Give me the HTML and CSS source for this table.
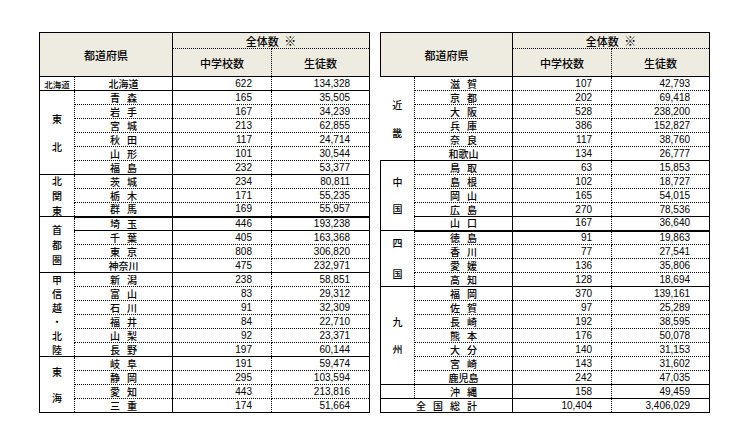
FILE: index.html
```html
<!DOCTYPE html>
<html lang="ja">
<head>
<meta charset="utf-8">
<title>都道府県別 中学校数・生徒数</title>
<link rel="stylesheet" href="styles.css">
</head>
<body>
<div class="page">
  <table class="tbl tbl-left">
    <colgroup><col class="c-reg"><col class="c-pref"><col class="c-n1"><col class="c-n2"></colgroup>
    <thead>
      <tr class="h1"><th colspan="2" rowspan="2" class="h-pref">都道府県</th><th colspan="2" class="h-total">全体数&ensp;<span class="mark">※</span></th></tr>
      <tr class="h2"><th class="h-sch">中学校数</th><th class="h-stu">生徒数</th></tr>
    </thead>
    <tbody>
      <tr class="end"><td class="reg small">北海道</td><td class="pref">北海道</td><td class="n1">622</td><td class="n2">134,328</td></tr>
      <tr><td class="reg v p28" rowspan="6"><span>東</span><span>北</span></td><td class="pref"><span class="s2">青森</span></td><td class="n1">165</td><td class="n2">35,505</td></tr>
      <tr><td class="pref"><span class="s2">岩手</span></td><td class="n1">167</td><td class="n2">34,239</td></tr>
      <tr><td class="pref"><span class="s2">宮城</span></td><td class="n1">213</td><td class="n2">62,855</td></tr>
      <tr><td class="pref"><span class="s2">秋田</span></td><td class="n1">117</td><td class="n2">24,714</td></tr>
      <tr><td class="pref"><span class="s2">山形</span></td><td class="n1">101</td><td class="n2">30,544</td></tr>
      <tr class="end"><td class="pref"><span class="s2">福島</span></td><td class="n1">232</td><td class="n2">53,377</td></tr>
      <tr><td class="reg v p15" rowspan="3"><span>北</span><span>関</span><span>東</span></td><td class="pref"><span class="s2">茨城</span></td><td class="n1">234</td><td class="n2">80,811</td></tr>
      <tr><td class="pref"><span class="s2">栃木</span></td><td class="n1">171</td><td class="n2">55,235</td></tr>
      <tr class="thick"><td class="pref"><span class="s2">群馬</span></td><td class="n1">169</td><td class="n2">55,957</td></tr>
      <tr class="solid"><td class="reg v p15" rowspan="4"><span>首</span><span>都</span><span>圏</span></td><td class="pref"><span class="s2">埼玉</span></td><td class="n1">446</td><td class="n2">193,238</td></tr>
      <tr><td class="pref"><span class="s2">千葉</span></td><td class="n1">405</td><td class="n2">163,368</td></tr>
      <tr><td class="pref"><span class="s2">東京</span></td><td class="n1">808</td><td class="n2">306,820</td></tr>
      <tr class="end"><td class="pref">神奈川</td><td class="n1">475</td><td class="n2">232,971</td></tr>
      <tr><td class="reg v p14" rowspan="6"><span>甲</span><span>信</span><span>越</span><span>・</span><span>北</span><span>陸</span></td><td class="pref"><span class="s2">新潟</span></td><td class="n1">238</td><td class="n2">58,851</td></tr>
      <tr><td class="pref"><span class="s2">富山</span></td><td class="n1">83</td><td class="n2">29,312</td></tr>
      <tr><td class="pref"><span class="s2">石川</span></td><td class="n1">91</td><td class="n2">32,309</td></tr>
      <tr><td class="pref"><span class="s2">福井</span></td><td class="n1">84</td><td class="n2">22,710</td></tr>
      <tr><td class="pref"><span class="s2">山梨</span></td><td class="n1">92</td><td class="n2">23,371</td></tr>
      <tr class="end"><td class="pref"><span class="s2">長野</span></td><td class="n1">197</td><td class="n2">60,144</td></tr>
      <tr><td class="reg v p26" rowspan="4"><span>東</span><span>海</span></td><td class="pref"><span class="s2">岐阜</span></td><td class="n1">191</td><td class="n2">59,474</td></tr>
      <tr><td class="pref"><span class="s2">静岡</span></td><td class="n1">295</td><td class="n2">103,594</td></tr>
      <tr><td class="pref"><span class="s2">愛知</span></td><td class="n1">443</td><td class="n2">213,816</td></tr>
      <tr class="end"><td class="pref"><span class="s2">三重</span></td><td class="n1">174</td><td class="n2">51,664</td></tr>
    </tbody>
  </table>

  <table class="tbl tbl-right">
    <colgroup><col class="c-reg2"><col class="c-pref"><col class="c-n1"><col class="c-n2"></colgroup>
    <thead>
      <tr class="h1"><th colspan="2" rowspan="2" class="h-pref">都道府県</th><th colspan="2" class="h-total">全体数&ensp;<span class="mark">※</span></th></tr>
      <tr class="h2"><th class="h-sch">中学校数</th><th class="h-stu">生徒数</th></tr>
    </thead>
    <tbody>
      <tr><td class="reg v p28 noleft" rowspan="6"><span>近</span><span>畿</span></td><td class="pref"><span class="s2">滋賀</span></td><td class="n1">107</td><td class="n2">42,793</td></tr>
      <tr><td class="pref"><span class="s2">京都</span></td><td class="n1">202</td><td class="n2">69,418</td></tr>
      <tr><td class="pref"><span class="s2">大阪</span></td><td class="n1">528</td><td class="n2">238,200</td></tr>
      <tr><td class="pref"><span class="s2">兵庫</span></td><td class="n1">386</td><td class="n2">152,827</td></tr>
      <tr><td class="pref"><span class="s2">奈良</span></td><td class="n1">117</td><td class="n2">38,760</td></tr>
      <tr class="end"><td class="pref">和歌山</td><td class="n1">134</td><td class="n2">26,777</td></tr>
      <tr><td class="reg v p27" rowspan="5"><span>中</span><span>国</span></td><td class="pref"><span class="s2">鳥取</span></td><td class="n1">63</td><td class="n2">15,853</td></tr>
      <tr><td class="pref"><span class="s2">島根</span></td><td class="n1">102</td><td class="n2">18,727</td></tr>
      <tr><td class="pref"><span class="s2">岡山</span></td><td class="n1">165</td><td class="n2">54,015</td></tr>
      <tr class="solid"><td class="pref"><span class="s2">広島</span></td><td class="n1">270</td><td class="n2">78,536</td></tr>
      <tr class="thick"><td class="pref"><span class="s2">山口</span></td><td class="n1">167</td><td class="n2">36,640</td></tr>
      <tr><td class="reg v p31" rowspan="4"><span>四</span><span>国</span></td><td class="pref"><span class="s2">徳島</span></td><td class="n1">91</td><td class="n2">19,863</td></tr>
      <tr><td class="pref"><span class="s2">香川</span></td><td class="n1">77</td><td class="n2">27,541</td></tr>
      <tr><td class="pref"><span class="s2">愛媛</span></td><td class="n1">136</td><td class="n2">35,806</td></tr>
      <tr class="end"><td class="pref"><span class="s2">高知</span></td><td class="n1">128</td><td class="n2">18,694</td></tr>
      <tr><td class="reg v p27" rowspan="7"><span>九</span><span>州</span></td><td class="pref"><span class="s2">福岡</span></td><td class="n1">370</td><td class="n2">139,161</td></tr>
      <tr><td class="pref"><span class="s2">佐賀</span></td><td class="n1">97</td><td class="n2">25,289</td></tr>
      <tr><td class="pref"><span class="s2">長崎</span></td><td class="n1">192</td><td class="n2">38,595</td></tr>
      <tr><td class="pref"><span class="s2">熊本</span></td><td class="n1">176</td><td class="n2">50,078</td></tr>
      <tr><td class="pref"><span class="s2">大分</span></td><td class="n1">140</td><td class="n2">31,153</td></tr>
      <tr><td class="pref"><span class="s2">宮崎</span></td><td class="n1">143</td><td class="n2">31,602</td></tr>
      <tr class="end"><td class="pref">鹿児島</td><td class="n1">242</td><td class="n2">47,035</td></tr>
      <tr class="end"><td class="reg"></td><td class="pref"><span class="s2">沖縄</span></td><td class="n1">158</td><td class="n2">49,459</td></tr>
      <tr class="end"><td class="pref total" colspan="2"><span class="s4">全国総計</span></td><td class="n1">10,404</td><td class="n2">3,406,029</td></tr>
    </tbody>
  </table>
</div>
</body>
</html>
```
FILE: styles.css
```css
html, body {
  margin: 0;
  padding: 0;
  background: #ffffff;
}

.page {
  display: flex;
  align-items: flex-start;
  gap: 10px;
  padding: 32px 0 0 39px;
  font-family: "Noto Sans CJK JP", "Liberation Sans", sans-serif;
  color: #000;
}

.tbl {
  border-collapse: collapse;
  table-layout: fixed;
  border: 1px solid #000;
}

.tbl-left { width: 331px; }
.tbl-right { width: 330px; }

.c-reg { width: 35px; }
.c-reg2 { width: 34px; }
.c-pref { width: 98px; }
.c-n1 { width: 99px; }
.c-n2 { width: 98px; }

.tbl th {
  background: #eeece1;
  font-weight: 500;
  font-size: 11px;
  padding: 0;
  text-align: center;
  vertical-align: middle;
  line-height: 12px;
}

.mark { font-size: 12px; }

.h1 { height: 16px; }
.h2 { height: 28px; }

.h-pref {
  border-right: 1px solid #000;
  border-bottom: 1px solid #000;
}
.h-total { border-bottom: 1px dotted #000; }
.h-sch {
  border-right: 1px dotted #000;
  border-bottom: 1px solid #000;
}
.h-stu { border-bottom: 1px solid #000; }

.tbl tbody tr { height: 14px; }

.tbl td {
  padding: 0;
  line-height: 12px;
  vertical-align: middle;
  border-bottom: 1px dotted #000;
  white-space: nowrap;
}

.tbl tr.end td { border-bottom: 1px solid #000; }
.tbl tr.solid td { border-bottom: 1px solid #000; }
.tbl tr.thick td { border-bottom: 2px solid #000; }

.reg {
  border-right: 1px dotted #000;
  text-align: center;
  font-size: 10px;
  font-weight: 500;
}
.tbl td.reg { border-bottom: 1px solid #000; }
.tbl td.noleft { border-left: hidden; }

.reg.small { font-size: 8.5px; }

.v span {
  display: block;
  height: 10px;
  line-height: 10px;
}
.p14 span + span { margin-top: 4px; }
.p15 span + span { margin-top: 5px; }
.p26 span + span { margin-top: 16px; }
.p27 span + span { margin-top: 17px; }
.p28 span + span { margin-top: 18px; }
.p31 span + span { margin-top: 21px; }

.pref {
  border-right: 1px solid #000;
  text-align: center;
  font-size: 10px;
  font-weight: 500;
}

.s2 {
  letter-spacing: 7px;
  margin-right: -7px;
}
.s4 {
  letter-spacing: 7px;
  margin-right: -7px;
}

.n1, .n2 {
  font-family: "Liberation Sans", Arial, sans-serif;
  font-size: 10px;
  text-align: right;
  padding-right: 19px !important;
}
.n1 { border-right: 1px dotted #000; }
```
